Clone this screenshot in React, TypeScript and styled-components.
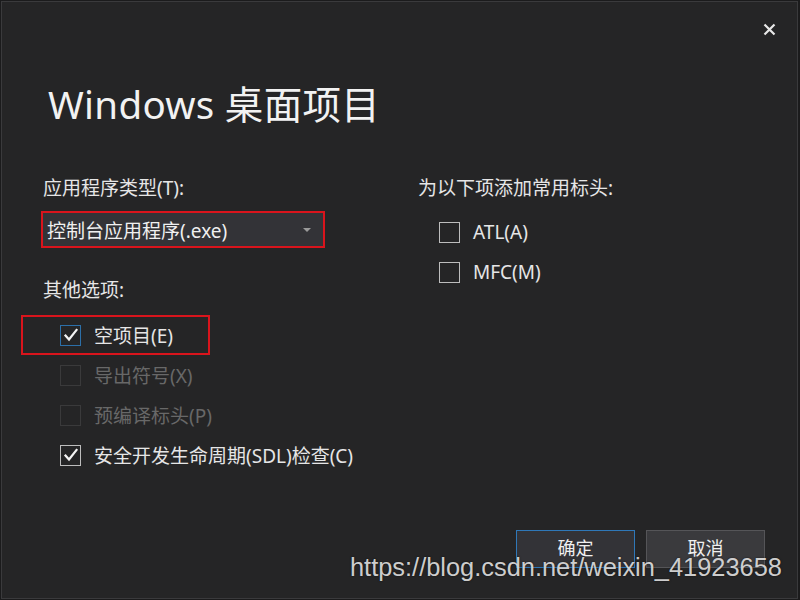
import React from 'react';
import styled, { createGlobalStyle } from 'styled-components';

const GlobalStyle = createGlobalStyle`
  html, body {
    margin: 0;
    padding: 0;
    background: #1b1b1c;
  }
  * {
    box-sizing: border-box;
  }
`;

const Dialog = styled.div`
  position: relative;
  width: 797px;
  height: 598px;
  margin: 1px 0 0 1px;
  border: 1px solid #3a3a3c;
  background: #252526;
  color: #e6e6e6;
  font-family: 'Noto Sans', 'Noto Sans CJK SC', sans-serif;
  display: flex;
  flex-direction: column;
`;

const TopBar = styled.div`
  height: 54px;
  display: flex;
  justify-content: flex-end;
  align-items: center;
  padding-right: 20px;
`;

const CloseButton = styled.button`
  width: 16px;
  height: 16px;
  padding: 0;
  border: none;
  background: transparent;
  display: flex;
  align-items: center;
  justify-content: center;
  cursor: pointer;
`;

const Title = styled.h1`
  margin: 24px 0 0 46px;
  font-size: 38.5px;
  font-weight: 400;
  line-height: 48px;
  color: #f2f2f2;
  letter-spacing: 0.3px;
`;

const Body = styled.div`
  display: grid;
  grid-template-columns: 375px 1fr;
  padding: 48px 0 0 41px;
`;

const Column = styled.div`
  display: flex;
  flex-direction: column;
`;

const GroupLabel = styled.div<{ $gap?: number }>`
  font-size: 19px;
  line-height: 24px;
  color: #e6e6e6;
  margin-top: ${p => p.$gap ?? 0}px;
`;

// red annotation frame drawn around a control
const Highlight = styled.div<{ $shift: number; $width: number; $gap: number }>`
  margin: ${p => p.$gap}px 0 0 -${p => p.$shift}px;
  padding-left: ${p => Math.max(p.$shift - 2, 0)}px;
  width: ${p => p.$width}px;
  border: 2px solid #d9141c;
`;

const Select = styled.div`
  height: 33px;
  width: 280px;
  background: #333337;
  display: flex;
  align-items: center;
  justify-content: space-between;
  padding: 0 12px 0 4px;
  font-size: 19px;
  color: #f0f0f0;
`;

const Caret = styled.span`
  width: 0;
  height: 0;
  border-left: 4px solid transparent;
  border-right: 4px solid transparent;
  border-top: 4px solid #9a9a9a;
`;

const Rows = styled.div<{ $gap: number }>`
  display: flex;
  flex-direction: column;
  margin-top: ${p => p.$gap}px;
`;

const CheckRow = styled.label<{ $indent: number; $disabled?: boolean; $height?: number }>`
  display: flex;
  align-items: center;
  gap: 13px;
  height: ${p => p.$height ?? 40}px;
  padding-left: ${p => p.$indent}px;
  font-size: 19px;
  color: ${p => (p.$disabled ? '#686868' : '#e6e6e6')};
`;

const Box = styled.span<{ $tone: 'focus' | 'normal' | 'disabled' }>`
  width: 21px;
  height: 21px;
  flex: none;
  display: flex;
  align-items: center;
  justify-content: center;
  background: #252526;
  border: 1px solid
    ${p => (p.$tone === 'focus' ? '#2c6fa8' : p.$tone === 'disabled' ? '#3a3a3b' : '#bdbdbd')};
`;

const Footer = styled.div`
  margin-top: auto;
  display: flex;
  justify-content: flex-end;
  gap: 11px;
  padding: 0 32px 30px 0;
`;

const Button = styled.button<{ $primary?: boolean }>`
  width: 119px;
  height: 38px;
  padding: 0 0 4px;
  font-family: inherit;
  font-size: 18px;
  color: #f0f0f0;
  background: ${p => (p.$primary ? '#333337' : '#3a3a3d')};
  border: 1px solid ${p => (p.$primary ? '#2f78b8' : '#555558')};
  cursor: pointer;
`;

const Watermark = styled.div`
  position: absolute;
  left: 348px;
  top: 551px;
  font-family: 'Liberation Sans', Arial, sans-serif;
  font-size: 25.4px;
  color: rgba(225, 225, 225, 0.92);
  text-shadow: 0 0 2px rgba(0, 0, 0, 0.6);
  pointer-events: none;
  white-space: nowrap;
`;

const Check = () => (
  <svg width="16" height="16" viewBox="0 0 16 16">
    <polyline points="2.5,8.5 6,12.5 13.5,3" fill="none" stroke="#f4f4f4" strokeWidth="2.2" strokeLinecap="square" />
  </svg>
);

type Option = { text: string; tone: 'focus' | 'normal' | 'disabled'; checked: boolean };

const otherOptions: Option[] = [
  { text: '导出符号(X)', tone: 'disabled', checked: false },
  { text: '预编译标头(P)', tone: 'disabled', checked: false },
  { text: '安全开发生命周期(SDL)检查(C)', tone: 'normal', checked: true },
];

const headerOptions = ['ATL(A)', 'MFC(M)'];

export default function App() {
  return (
    <>
      <GlobalStyle />
      <Dialog>
        <TopBar>
          <CloseButton aria-label="关闭">
            <svg width="13" height="13" viewBox="0 0 13 13">
              <path d="M1.5 1.5 L11.5 11.5 M11.5 1.5 L1.5 11.5" stroke="#e8e8e8" strokeWidth="2.2" />
            </svg>
          </CloseButton>
        </TopBar>
        <Title>Windows 桌面项目</Title>
        <Body>
          <Column>
            <GroupLabel>应用程序类型(T):</GroupLabel>
            <Highlight $shift={2} $width={284} $gap={11}>
              <Select>
                <span>控制台应用程序(.exe)</span>
                <Caret />
              </Select>
            </Highlight>
            <GroupLabel $gap={30}>其他选项:</GroupLabel>
            <Highlight $shift={22} $width={189} $gap={13}>
              <CheckRow $indent={17} $height={36}>
                <Box $tone="focus">
                  <Check />
                </Box>
                空项目(E)
              </CheckRow>
            </Highlight>
            <Rows $gap={0}>
              {otherOptions.map(o => (
                <CheckRow key={o.text} $indent={17} $disabled={o.tone === 'disabled'}>
                  <Box $tone={o.tone}>{o.checked && <Check />}</Box>
                  {o.text}
                </CheckRow>
              ))}
            </Rows>
          </Column>
          <Column>
            <GroupLabel>为以下项添加常用标头:</GroupLabel>
            <Rows $gap={12}>
              {headerOptions.map(t => (
                <CheckRow key={t} $indent={21}>
                  <Box $tone="normal" />
                  {t}
                </CheckRow>
              ))}
            </Rows>
          </Column>
        </Body>
        <Footer>
          <Button $primary>确定</Button>
          <Button>取消</Button>
        </Footer>
        <Watermark>https://blog.csdn.net/weixin_41923658</Watermark>
      </Dialog>
    </>
  );
}
